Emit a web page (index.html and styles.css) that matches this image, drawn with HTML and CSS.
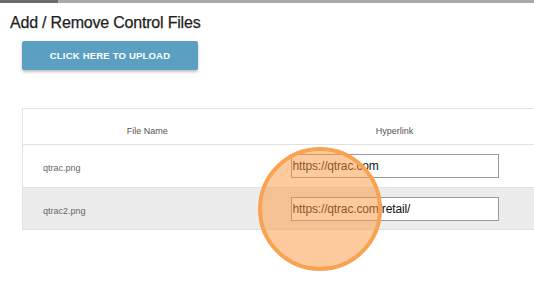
FILE: index.html
```html
<!DOCTYPE html>
<html lang="en">
<head>
    <meta charset="UTF-8">
    <meta name="viewport" content="width=device-width, initial-scale=1.0">
    <title>Control Files</title>
    <link rel="stylesheet" href="styles.css">
</head>
<body>
    <div class="top-bar">
        <div class="top-bar-active"></div>
    </div>
    <main>
        <h1 class="page-title">Add / Remove Control Files</h1>
        <a href="#" class="upload-button">CLICK HERE TO UPLOAD</a>

        <table class="files-table">
            <thead>
                <tr>
                    <th class="col-name">File Name</th>
                    <th class="col-link">Hyperlink</th>
                    <th class="col-extra"></th>
                </tr>
            </thead>
            <tbody>
                <tr>
                    <td class="file-name">qtrac.png</td>
                    <td><input type="text" class="link-input" value="https://qtrac.com"></td>
                    <td></td>
                </tr>
                <tr class="alt-row">
                    <td class="file-name">qtrac2.png</td>
                    <td><input type="text" class="link-input" value="https://qtrac.com/retail/"></td>
                    <td></td>
                </tr>
            </tbody>
        </table>
    </main>
    <!-- click highlight -->
    <div class="click-marker"></div>
</body>
</html>
```

FILE: styles.css
```css
html, body {
    margin: 0;
    padding: 0;
    overflow: hidden;
}

body {
    font-family: "Liberation Sans", Arial, sans-serif;
    background-color: #fff;
    color: #222;
    width: 534px;
    height: 297px;
    position: relative;
}

.top-bar {
    height: 3px;
    background-color: #a9a9a9;
}

.top-bar-active {
    width: 58px;
    height: 3px;
    background-color: #6a6a6a;
}

main {
    padding: 10px 0 0 10px;
}

.page-title {
    margin: 0;
    font-size: 16px;
    font-weight: normal;
    color: #1e1e1e;
    letter-spacing: -0.2px;
    line-height: 20px;
    -webkit-text-stroke: 0.25px #1e1e1e;
}

.upload-button {
    display: flex;
    align-items: center;
    justify-content: center;
    margin: 8px 0 0 12px;
    width: 176px;
    height: 29px;
    background-color: #5b9fc3;
    border-radius: 2px;
    box-shadow: 0 2px 3px rgba(0, 0, 0, 0.25);
    color: #fff;
    font-size: 9.5px;
    font-weight: bold;
    letter-spacing: 0.2px;
    text-decoration: none;
}

.files-table {
    margin: 38px 0 0 12px;
    width: 512px;
    border-collapse: collapse;
    border: 1px solid #e2e2e2;
    border-right: none;
    font-size: 9px;
    color: #555;
}

.files-table th {
    height: 36px;
    padding: 9px 0 0;
    box-sizing: border-box;
    font-weight: normal;
    text-align: center;
    border-bottom: 1px solid #e2e2e2;
}

.col-name {
    width: 249px;
}

.col-link {
    width: 246px;
}

.files-table td {
    height: 43px;
    padding: 0;
    box-sizing: border-box;
    border-bottom: 1px solid #e2e2e2;
}

.files-table .alt-row td {
    height: 42px;
}

.files-table .file-name {
    padding: 4px 0 0 20px;
    color: #666;
}

.alt-row {
    background-color: #ececec;
}

.link-input {
    display: block;
    box-sizing: border-box;
    margin-left: 19px;
    width: 208px;
    height: 24px;
    padding: 0 1px;
    border: 1px solid #9a9a9a;
    background-color: #fff;
    font-family: "Liberation Sans", Arial, sans-serif;
    font-size: 12px;
    letter-spacing: -0.15px;
    color: #111;
    outline: none;
}

.click-marker {
    position: absolute;
    left: 258px;
    top: 147px;
    width: 116px;
    height: 116px;
    border: 4px solid #f9a352;
    border-radius: 50%;
    background-color: rgba(249, 150, 60, 0.5);
}
```
